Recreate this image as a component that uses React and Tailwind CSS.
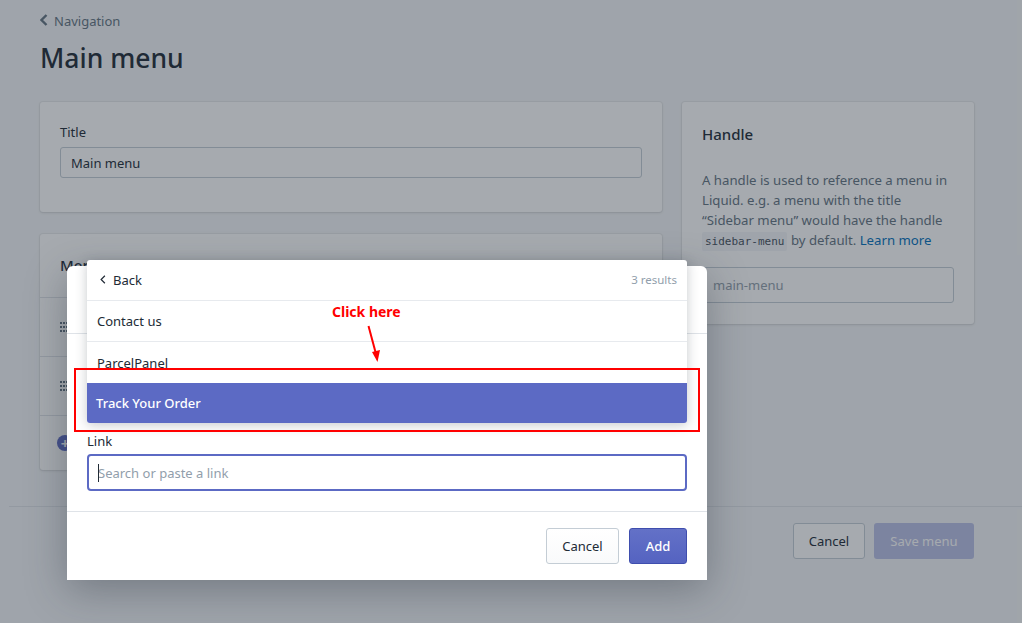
import React from "react";

const font = { fontFamily: '"Noto Sans", "Open Sans", sans-serif' };
const cardShadow = "shadow-[0_0_0_1px_rgba(63,63,68,0.05),0_1px_3px_0_rgba(63,63,68,0.15)]";

function Grip() {
  return (
    <svg width="8" height="10" viewBox="0 0 8 10" className="fill-[#637381]">
      {[0, 3, 6].map((x) =>
        [0, 4, 8].map((y) => <rect key={`${x}-${y}`} x={x} y={y} width="2" height="2" />)
      )}
    </svg>
  );
}

function Chevron({ className, w = 2 }) {
  return (
    <svg viewBox="0 0 8 12" className={className} fill="none" stroke="currentColor" strokeWidth={w}>
      <path d="M6.5 1 L1.5 6 L6.5 11" />
    </svg>
  );
}

export default function App() {
  return (
    <div
      className="relative h-[623px] w-[1022px] overflow-hidden bg-[#f4f6f8] text-[13px] leading-5 text-[#212b36]"
      style={font}
    >
      {/* Page */}
      <div className="pl-10 pr-12 pt-[11px]">
        <div className="flex h-5 items-center gap-[6px] text-[#637381]">
          <Chevron className="mt-[-2px] h-3 w-2 text-[#637381]" w={2.4} />
          <span>Navigation</span>
        </div>
        <h1 className="mt-[9px] h-9 text-[26.5px] font-medium leading-9 text-[#212b36]">Main menu</h1>
        <div className="mt-[26px] flex gap-5">
          <div className="flex w-[622px] flex-col gap-[22px]">
            <div className={`h-[110px] rounded-[3px] bg-white px-5 pt-5 ${cardShadow}`}>
              <div className="h-5">Title</div>
              <div className="mt-[5px] flex h-[31px] items-center rounded-[3px] border border-[#c4cdd5] px-[10px]">
                Main menu
              </div>
            </div>
            <div className={`h-[236px] rounded-[3px] bg-white ${cardShadow}`}>
              <div className="h-[63px] pl-5 pt-[21px] text-[15px] font-medium">Menu items</div>
              <div className="flex h-[59px] items-center border-t border-[#dfe3e8] pl-5">
                <Grip />
              </div>
              <div className="flex h-[59px] items-center border-t border-[#dfe3e8] pl-5">
                <Grip />
              </div>
              <div className="flex h-[55px] items-center border-t border-[#dfe3e8] pl-[17px]">
                <span className="flex h-[16px] w-[16px] items-center justify-center rounded-full bg-[#5c6ac4] text-[15px] font-bold leading-none text-white">
                  +
                </span>
              </div>
            </div>
          </div>
          <div className={`h-[222px] w-[292px] rounded-[3px] bg-white px-5 pt-[22px] ${cardShadow}`}>
            <h2 className="h-5 text-[15px] font-medium">Handle</h2>
            <p className="mt-[26px] text-[13.2px] text-[#637381]">
              A handle is used to reference a menu in
              <br />
              Liquid. e.g. a menu with the title
              <br />
              “Sidebar menu” would have the handle
              <br />
              <code
                className="whitespace-nowrap rounded-[2px] bg-[#f4f6f8] px-[3px] py-[3px] text-[11px] leading-none text-[#454f5b]"
                style={{ fontFamily: '"DejaVu Sans Mono", monospace' }}
              >
                sidebar-menu
              </code>{" "}
              by default. <span className="text-[#006fbb]">Learn more</span>
            </p>
            <div className="mt-[17px] flex h-9 items-center rounded-[3px] border border-[#c4cdd5] px-[10px] text-[#919eab]">
              main-menu
            </div>
          </div>
        </div>
        <div className="-ml-[31px] -mr-12 mt-[36px] border-t border-[#dfe3e8]" />
        <div className="mt-4 flex justify-end gap-[9px]">
          <div className="flex h-9 w-[72px] items-center justify-center rounded-[3px] border border-[#c4cdd5] bg-white">
            Cancel
          </div>
          <div className="flex h-9 w-[100px] items-center justify-center rounded-[3px] bg-[#bac0e6] text-white">
            Save menu
          </div>
        </div>
      </div>

      {/* Backdrop */}
      <div className="absolute inset-0 bg-[#212b36]/40" />

      {/* Modal */}
      <div className="absolute left-[67px] top-[266px] h-[314px] w-[640px] rounded-t-[6px] bg-white shadow-[0_10px_40px_rgba(33,43,54,0.35)]">
        <div className="h-[68px] border-b border-[#dfe3e8]" />
        <div className="px-5 pt-[97px]">
          <div className="h-5">Link</div>
          <div className="relative mt-[3px] flex h-[37px] items-center rounded-[4px] border-2 border-[#5c6ac4] pl-[9px] text-[#919eab]">
            <span className="absolute left-[9px] top-[8px] h-[18px] w-px bg-[#212b36]" />
            Search or paste a link
          </div>
        </div>
        <div className="mt-5 flex h-[68px] items-center justify-end gap-[10px] border-t border-[#dfe3e8] px-5">
          <div className="flex h-9 w-[73px] items-center justify-center rounded-[3px] border border-[#c4cdd5] bg-gradient-to-b from-white to-[#f9fafb] text-[#212b36]">
            Cancel
          </div>
          <div className="flex h-9 w-[58px] items-center justify-center rounded-[3px] border border-[#3f4eae] bg-gradient-to-b from-[#6371c7] to-[#5563c1] font-medium text-white">
            Add
          </div>
        </div>
      </div>

      {/* Dropdown */}
      <div className="absolute left-[87px] top-[260px] w-[600px] rounded-[3px] bg-white shadow-[0_2px_12px_rgba(33,43,54,0.25)]">
        <div className="flex h-[41px] items-center justify-between border-b border-[#e7eaee] pl-[13px] pr-[10px]">
          <div className="flex items-center gap-[7px]">
            <Chevron className="mt-[-2px] h-[9px] w-[6px] text-[#212b36]" w={1.6} />
            <span>Back</span>
          </div>
          <span className="text-[11.5px] text-[#919eab]">3 results</span>
        </div>
        <div className="flex h-[41px] items-center border-b border-[#e7eaee] pl-[10px]">Contact us</div>
        <div className="flex h-[41px] items-center pl-[10px]">ParcelPanel</div>
        <div className="flex h-10 items-center rounded-b-[3px] bg-[#5c6ac4] pl-[9px] font-medium text-white">
          Track Your Order
        </div>
      </div>

      {/* Annotations */}
      <div className="absolute left-[74px] top-[368px] h-[64px] w-[626px] border-2 border-[#ff0000]" />
      <div className="absolute left-[332px] top-[302px] text-[14px] font-bold text-[#ff0000]">Click here</div>
      <svg className="absolute left-[360px] top-[322px]" width="26" height="44" viewBox="0 0 26 44">
        <path d="M8.5 4 L16 32" stroke="#ff0000" strokeWidth="2" fill="none" />
        <path d="M12 30 L20 28 L17.5 40 Z" fill="#ff0000" />
      </svg>
    </div>
  );
}
